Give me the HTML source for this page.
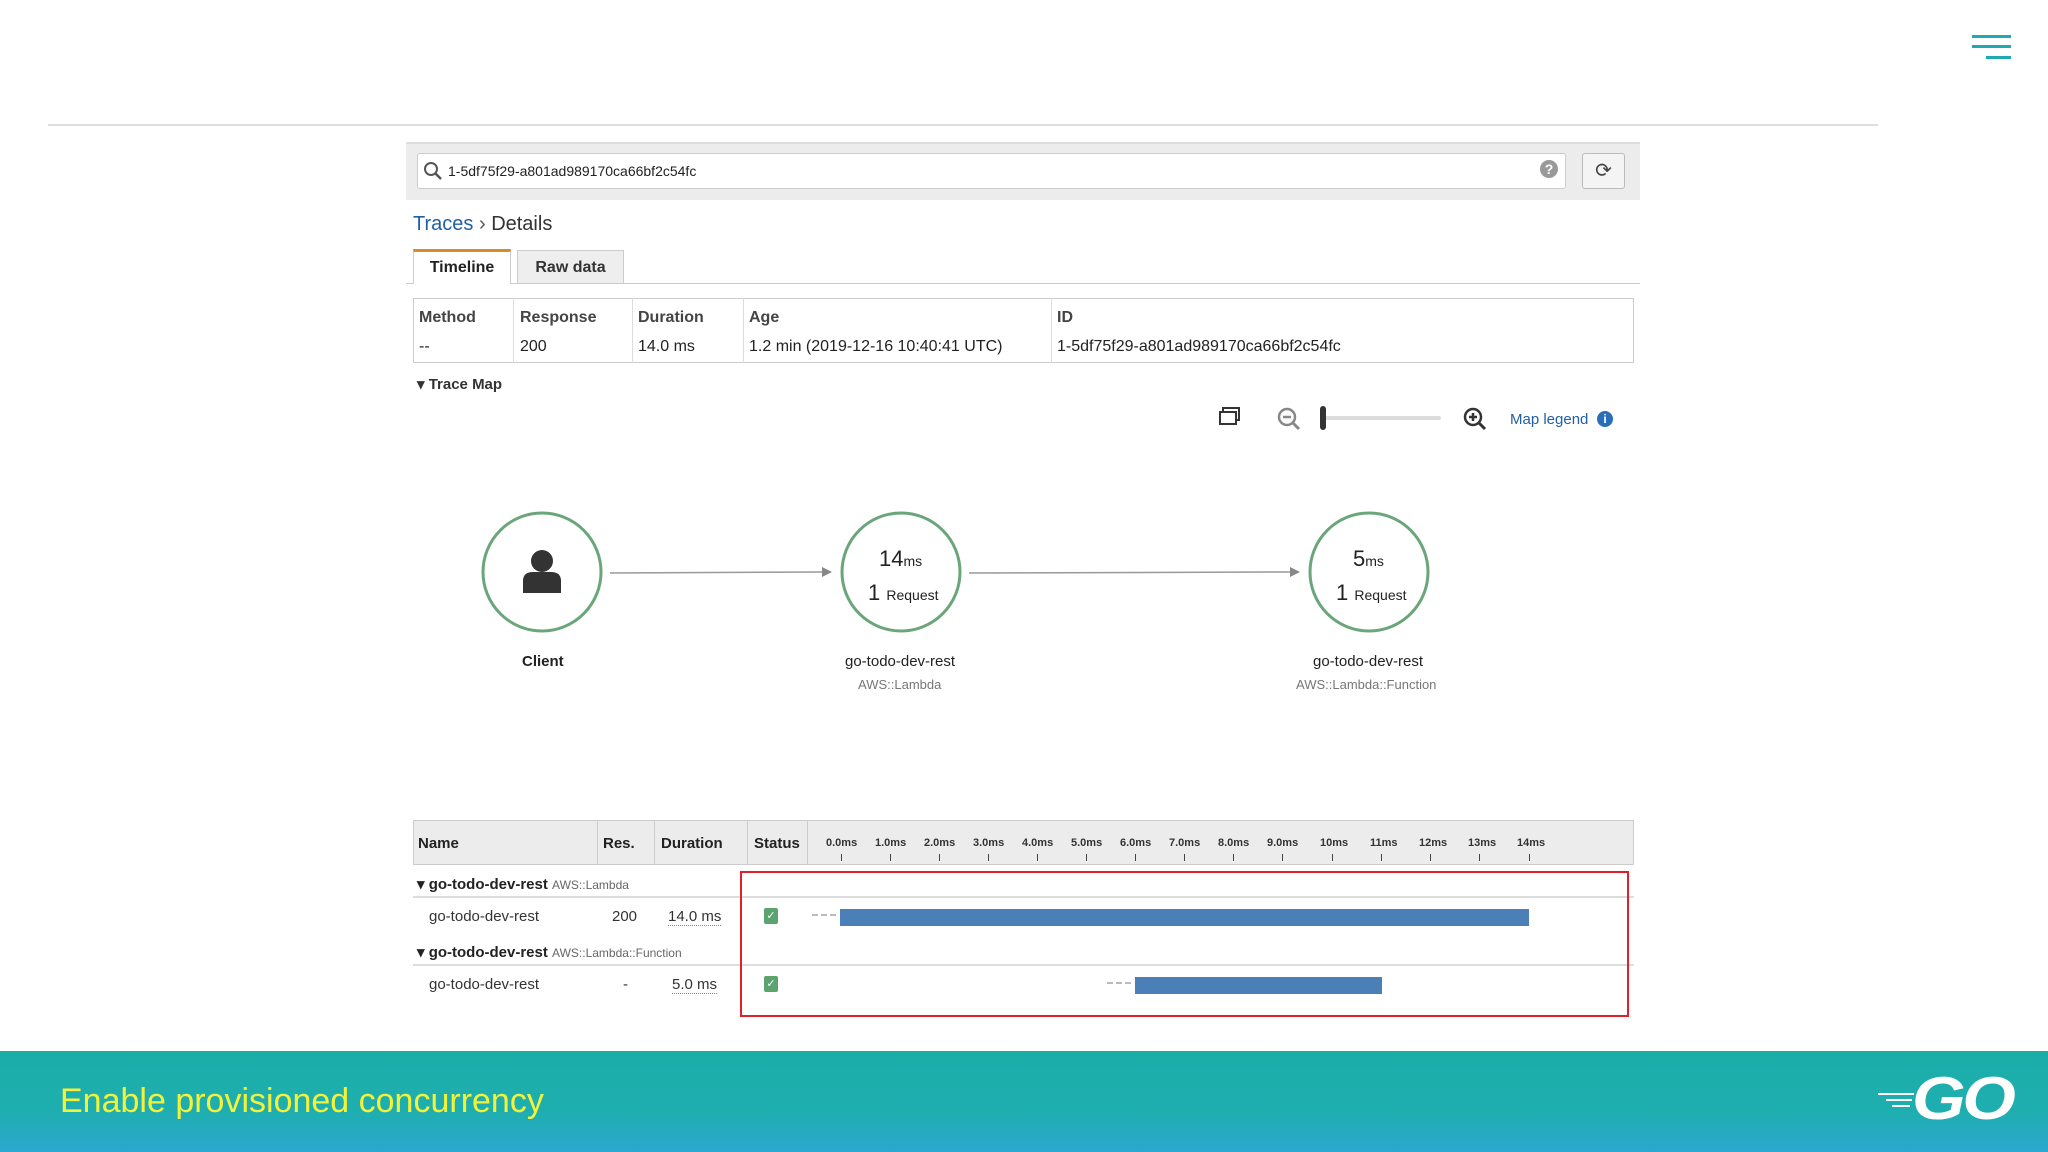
<!DOCTYPE html><html><head><meta charset="utf-8"><style>
*{margin:0;padding:0;box-sizing:border-box}
body{width:2048px;height:1152px;position:relative;background:#fff;font-family:"Liberation Sans",sans-serif;color:#222;overflow:hidden}
.a{position:absolute}
.t{position:absolute;white-space:nowrap}
.hd{font-weight:bold;color:#444;font-size:16px}
.tick{position:absolute;top:22px;width:2px;height:7px;background:#444}
</style></head><body>
<div class="a" style="left:1972px;top:35px;width:39px;height:3px;background:#1fa9b5"></div>
<div class="a" style="left:1972px;top:45px;width:39px;height:3px;background:#1fa9b5"></div>
<div class="a" style="left:1986px;top:56px;width:25px;height:3px;background:#1fa9b5"></div>
<div class="a" style="left:48px;top:124px;width:1830px;height:2px;background:#ddd"></div>

<div class="a" style="left:406px;top:142px;width:1234px;height:58px;background:#ececec;border-top:2px solid #ddd"></div>
<div class="a" style="left:417px;top:153px;width:1149px;height:36px;background:#fff;border:1px solid #ccc;border-radius:3px"></div>
<svg class="a" style="left:423px;top:161px" width="20" height="20"><circle cx="8" cy="8" r="6" fill="none" stroke="#555" stroke-width="2"/><line x1="12" y1="12" x2="18" y2="18" stroke="#555" stroke-width="2.5"/></svg>
<div class="t" style="left:448px;top:163px;font-size:14px;color:#222">1-5df75f29-a801ad989170ca66bf2c54fc</div>
<div class="a" style="left:1540px;top:160px;width:18px;height:18px;border-radius:50%;background:#999;color:#fff;font-size:14px;font-weight:bold;text-align:center;line-height:18px">?</div>
<div class="a" style="left:1582px;top:153px;width:43px;height:36px;background:#f4f4f4;border:1px solid #bbb;border-radius:3px;text-align:center;line-height:34px;font-size:20px;color:#444">⟳</div>

<div class="t" style="left:413px;top:213px;font-size:20px"><span style="color:#1f5fa8">Traces</span> <span style="color:#555">›</span> <span style="color:#333">Details</span></div>
<div class="a" style="left:406px;top:283px;width:1234px;height:1px;background:#ccc"></div>
<div class="a" style="left:413px;top:249px;width:98px;height:35px;background:#fff;border:1px solid #ccc;border-bottom:none;border-top:3px solid #d98a2b;font-weight:bold;font-size:16px;text-align:center;line-height:32px">Timeline</div>
<div class="a" style="left:517px;top:250px;width:107px;height:33px;background:#eee;border:1px solid #ccc;border-bottom:none;font-weight:bold;font-size:16px;color:#333;text-align:center;line-height:34px">Raw data</div>

<div class="a" style="left:413px;top:298px;width:1221px;height:65px;border:1px solid #ccc"></div>
<div class="a" style="left:513px;top:298px;width:1px;height:65px;background:#ddd"></div>
<div class="a" style="left:632px;top:298px;width:1px;height:65px;background:#ddd"></div>
<div class="a" style="left:743px;top:298px;width:1px;height:65px;background:#ddd"></div>
<div class="a" style="left:1051px;top:298px;width:1px;height:65px;background:#ddd"></div>
<div class="t hd" style="left:419px;top:309px">Method</div><div class="t hd" style="left:520px;top:309px">Response</div><div class="t hd" style="left:638px;top:309px">Duration</div><div class="t hd" style="left:749px;top:309px">Age</div><div class="t hd" style="left:1057px;top:309px">ID</div>
<div class="t" style="left:419px;top:338px;font-size:16px">--</div><div class="t" style="left:520px;top:338px;font-size:16px">200</div><div class="t" style="left:638px;top:338px;font-size:16px">14.0 ms</div><div class="t" style="left:749px;top:338px;font-size:16px">1.2 min (2019-12-16 10:40:41 UTC)</div><div class="t" style="left:1057px;top:338px;font-size:16px">1-5df75f29-a801ad989170ca66bf2c54fc</div>
<div class="t" style="left:417px;top:375px;font-size:15px;font-weight:bold;color:#333">▾ Trace Map</div>

<svg class="a" style="left:1218px;top:406px" width="24" height="22"><rect x="5" y="2" width="16" height="12" fill="none" stroke="#333" stroke-width="2"/><rect x="2" y="6" width="16" height="12" fill="#fff" stroke="#333" stroke-width="2"/></svg>
<svg class="a" style="left:1276px;top:406px" width="26" height="26"><circle cx="11" cy="11" r="8" fill="none" stroke="#888" stroke-width="2.5"/><line x1="7" y1="11" x2="15" y2="11" stroke="#888" stroke-width="2.5"/><line x1="17" y1="17" x2="23" y2="23" stroke="#888" stroke-width="3"/></svg>
<div class="a" style="left:1322px;top:416px;width:119px;height:4px;background:#ddd;border-radius:2px"></div>
<div class="a" style="left:1320px;top:406px;width:6px;height:24px;background:#333;border-radius:3px"></div>
<svg class="a" style="left:1462px;top:406px" width="26" height="26"><circle cx="11" cy="11" r="8" fill="none" stroke="#333" stroke-width="2.5"/><line x1="7" y1="11" x2="15" y2="11" stroke="#333" stroke-width="2.5"/><line x1="11" y1="7" x2="11" y2="15" stroke="#333" stroke-width="2.5"/><line x1="17" y1="17" x2="23" y2="23" stroke="#333" stroke-width="3"/></svg>
<div class="t" style="left:1510px;top:411px;font-size:15px;color:#1f5fa8">Map legend</div>
<div class="a" style="left:1597px;top:411px;width:16px;height:16px;border-radius:50%;background:#2a6ebb;color:#fff;font-size:12px;font-weight:bold;text-align:center;line-height:16px">i</div>

<svg class="a" style="left:0;top:0" width="2048" height="800">
<circle cx="542" cy="572" r="59" fill="#fff" stroke="#6aa67a" stroke-width="3"/>
<circle cx="901" cy="572" r="59" fill="#fff" stroke="#6aa67a" stroke-width="3"/>
<circle cx="1369" cy="572" r="59" fill="#fff" stroke="#6aa67a" stroke-width="3"/>
<circle cx="542" cy="561" r="11" fill="#333"/><path d="M523 593 v-12 q0-9 10-9 h18 q10 0 10 9 v12 z" fill="#333"/>
<line x1="610" y1="573" x2="822" y2="572" stroke="#999" stroke-width="1.5"/><path d="M822 567 l10 5 l-10 5z" fill="#888"/>
<line x1="969" y1="573" x2="1290" y2="572" stroke="#999" stroke-width="1.5"/><path d="M1290 567 l10 5 l-10 5z" fill="#888"/>
</svg>
<div class="t" style="left:879px;top:546px;font-size:22px">14<span style="font-size:14px">ms</span></div>
<div class="t" style="left:868px;top:580px;font-size:22px">1 <span style="font-size:14px">Request</span></div>
<div class="t" style="left:1353px;top:546px;font-size:22px">5<span style="font-size:14px">ms</span></div>
<div class="t" style="left:1336px;top:580px;font-size:22px">1 <span style="font-size:14px">Request</span></div>
<div class="t" style="left:522px;top:653px;font-size:15px;font-weight:bold">Client</div>
<div class="t" style="left:845px;top:653px;font-size:15px">go-todo-dev-rest</div>
<div class="t" style="left:858px;top:677px;font-size:13px;color:#777">AWS::Lambda</div>
<div class="t" style="left:1313px;top:653px;font-size:15px">go-todo-dev-rest</div>
<div class="t" style="left:1296px;top:677px;font-size:13px;color:#777">AWS::Lambda::Function</div>

<div class="a" style="left:413px;top:820px;width:1221px;height:45px;background:#ececec;border:1px solid #ccc"></div>
<div class="a" style="left:597px;top:820px;width:1px;height:45px;background:#ccc"></div>
<div class="a" style="left:654px;top:820px;width:1px;height:45px;background:#ccc"></div>
<div class="a" style="left:747px;top:820px;width:1px;height:45px;background:#ccc"></div>
<div class="a" style="left:807px;top:820px;width:1px;height:45px;background:#ccc"></div>
<div class="t hd" style="left:418px;top:835px;color:#222;font-size:15px">Name</div><div class="t hd" style="left:603px;top:835px;color:#222;font-size:15px">Res.</div><div class="t hd" style="left:661px;top:835px;color:#222;font-size:15px">Duration</div><div class="t hd" style="left:754px;top:835px;color:#222;font-size:15px">Status</div>
<div class="a" style="left:0;top:837px;width:2048px;height:40px;font-size:11px;font-weight:bold;color:#333">
<div class="t" style="left:826px">0.0ms</div><div class="t" style="left:875px">1.0ms</div><div class="t" style="left:924px">2.0ms</div><div class="t" style="left:973px">3.0ms</div><div class="t" style="left:1022px">4.0ms</div><div class="t" style="left:1071px">5.0ms</div><div class="t" style="left:1120px">6.0ms</div><div class="t" style="left:1169px">7.0ms</div><div class="t" style="left:1218px">8.0ms</div><div class="t" style="left:1267px">9.0ms</div><div class="t" style="left:1320px">10ms</div><div class="t" style="left:1370px">11ms</div><div class="t" style="left:1419px">12ms</div><div class="t" style="left:1468px">13ms</div><div class="t" style="left:1517px">14ms</div>
<div class="tick" style="left:841px;width:1px;top:17px"></div><div class="tick" style="left:890px;width:1px;top:17px"></div><div class="tick" style="left:939px;width:1px;top:17px"></div><div class="tick" style="left:988px;width:1px;top:17px"></div><div class="tick" style="left:1037px;width:1px;top:17px"></div><div class="tick" style="left:1086px;width:1px;top:17px"></div><div class="tick" style="left:1135px;width:1px;top:17px"></div><div class="tick" style="left:1184px;width:1px;top:17px"></div><div class="tick" style="left:1233px;width:1px;top:17px"></div><div class="tick" style="left:1282px;width:1px;top:17px"></div><div class="tick" style="left:1332px;width:1px;top:17px"></div><div class="tick" style="left:1381px;width:1px;top:17px"></div><div class="tick" style="left:1430px;width:1px;top:17px"></div><div class="tick" style="left:1479px;width:1px;top:17px"></div><div class="tick" style="left:1529px;width:1px;top:17px"></div>
</div>
<div class="a" style="left:413px;top:896px;width:1221px;height:2px;background:#ddd"></div>
<div class="a" style="left:413px;top:964px;width:1221px;height:2px;background:#ddd"></div>
<div class="t" style="left:417px;top:875px;font-size:15px"><b>▾ go-todo-dev-rest</b> <span style="font-size:12px;color:#666">AWS::Lambda</span></div>
<div class="t" style="left:417px;top:943px;font-size:15px"><b>▾ go-todo-dev-rest</b> <span style="font-size:12px;color:#666">AWS::Lambda::Function</span></div>
<div class="t" style="left:429px;top:908px;font-size:15px;color:#333">go-todo-dev-rest</div>
<div class="t" style="left:612px;top:908px;font-size:15px;color:#333">200</div>
<div class="t" style="left:668px;top:908px;font-size:15px;color:#333;border-bottom:1px dotted #888">14.0 ms</div>
<div class="t" style="left:429px;top:976px;font-size:15px;color:#333">go-todo-dev-rest</div>
<div class="t" style="left:623px;top:976px;font-size:15px;color:#333">-</div>
<div class="t" style="left:672px;top:976px;font-size:15px;color:#333;border-bottom:1px dotted #888">5.0 ms</div>
<div class="a" style="left:764px;top:908px;width:14px;height:16px;background:#5ba46f;border-radius:2px;color:#fff;font-size:11px;text-align:center;line-height:16px">✓</div>
<div class="a" style="left:764px;top:976px;width:14px;height:16px;background:#5ba46f;border-radius:2px;color:#fff;font-size:11px;text-align:center;line-height:16px">✓</div>
<div class="a" style="left:812px;top:914px;width:24px;border-top:2px dashed #bbb"></div>
<div class="a" style="left:1107px;top:982px;width:24px;border-top:2px dashed #bbb"></div>
<div class="a" style="left:840px;top:909px;width:689px;height:17px;background:#4a7fb8"></div>
<div class="a" style="left:1135px;top:977px;width:247px;height:17px;background:#4a7fb8"></div>
<div class="a" style="left:740px;top:871px;width:889px;height:146px;border:2px solid #e0202a"></div>

<div class="a" style="left:0;top:1051px;width:2048px;height:101px;background:linear-gradient(#1aaea7,#1faeb0 60%,#2ba8cf)"></div>
<div class="t" style="left:60px;top:1082px;font-size:34px;color:#f2f23a">Enable provisioned concurrency</div>
<div class="a" style="left:1878px;top:1093px;width:36px;height:2px;background:#fff"></div>
<div class="a" style="left:1886px;top:1099px;width:26px;height:2px;background:#fff"></div>
<div class="a" style="left:1892px;top:1105px;width:18px;height:2px;background:#fff"></div>
<div class="t" style="left:1912px;top:1064px;font-size:60px;font-weight:bold;font-style:italic;color:#fff;letter-spacing:-3px;transform:scaleX(1.15);transform-origin:left">GO</div>
</body></html>
